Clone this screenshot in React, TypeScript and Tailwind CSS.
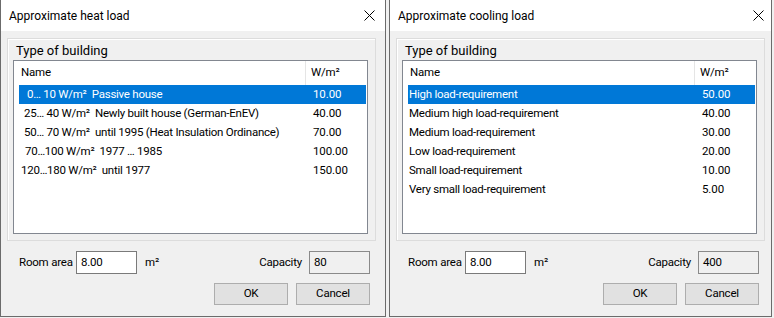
import React from "react";

type Row = { name: string; val: string; pad: string };

const heatRows: Row[] = [
  { name: "0… 10 W/m²  Passive house", val: "10.00", pad: "pl-[8px]" },
  { name: "25… 40 W/m²  Newly built house (German-EnEV)", val: "40.00", pad: "pl-[5px]" },
  { name: "50… 70 W/m²  until 1995 (Heat Insulation Ordinance)", val: "70.00", pad: "pl-[5px]" },
  { name: "70…100 W/m²  1977 … 1985", val: "100.00", pad: "pl-[6px]" },
  { name: "120…180 W/m²  until 1977", val: "150.00", pad: "pl-[2px]" },
];

const coolRows: Row[] = [
  { name: "High load-requirement", val: "50.00", pad: "pl-[1px]" },
  { name: "Medium high load-requirement", val: "40.00", pad: "pl-[1px]" },
  { name: "Medium load-requirement", val: "30.00", pad: "pl-[1px]" },
  { name: "Low load-requirement", val: "20.00", pad: "pl-[1px]" },
  { name: "Small load-requirement", val: "10.00", pad: "pl-[1px]" },
  { name: "Very small load-requirement", val: "5.00", pad: "pl-[1px]" },
];

function Dialog({
  title,
  rows,
  capacity,
  outer,
}: {
  title: string;
  rows: Row[];
  capacity: string;
  outer: string;
}) {
  return (
    <div className={`${outer} h-[317px] shrink-0 overflow-hidden border-x border-b border-[#6b6b6b] bg-[#f0f0f0]`}>
      <div className="w-[384px]">
        {/* Title bar */}
        <div className="flex h-[31px] items-center bg-white">
          <div className="pl-[8px] text-[12px] leading-none text-black">{title}</div>
          <div className="flex-1" />
          <svg width="11" height="11" viewBox="0 0 11 11" className="mr-[10px]">
            <path d="M0.5 0.5 L10.5 10.5 M10.5 0.5 L0.5 10.5" stroke="#000" strokeWidth="1" />
          </svg>
        </div>
        {/* Content column */}
        <div className="ml-[6px] w-[369px]">
          {/* Group box */}
          <div className="mt-[7px] h-[203px] border border-[#dcdcdc] shadow-[inset_1px_1px_0_#ffffff]">
            <div className="flex h-[21px] items-center pl-[8px] pt-[1px] text-[13px] leading-none text-black">
              Type of building
            </div>
            <div className="ml-[5px] h-[174px] w-[355px] border border-[#828790] bg-white">
              <div className="flex h-[24px] text-[11.5px] tracking-[-0.2px] text-black">
                <div className="flex w-[291px] items-center pl-[7px]">Name</div>
                <div className="w-px bg-[#e5e5e5]" />
                <div className="flex items-center pl-[5px]">W/m²</div>
              </div>
              {rows.map((r, i) => (
                <div
                  key={i}
                  className={`ml-[5px] flex h-[19px] w-[347px] items-center text-[11.5px] leading-none tracking-[-0.25px] ${
                    i === 0 ? "bg-[#0078d7] text-white" : "text-black"
                  }`}
                >
                  <div className={`w-[294px] whitespace-pre ${r.pad}`}>{r.name}</div>
                  <div className="tracking-[-0.1px]">{r.val}</div>
                </div>
              ))}
            </div>
          </div>
          {/* Room area row */}
          <div className="mt-[10px] flex h-[23px] items-center pr-[6px] text-[11.5px] tracking-[-0.2px] text-black">
            <div className="w-[69px] whitespace-nowrap pl-[12px]">Room area</div>
            <div className="flex h-[23px] w-[61px] items-center border border-[#7a7a7a] bg-white pl-[4px]">
              8.00
            </div>
            <div className="ml-[8px]">m²</div>
            <div className="flex-1" />
            <div>Capacity</div>
            <div className="ml-[7px] flex h-[23px] w-[61px] items-center border border-[#8a8a8a] bg-[#f0f0f0] pl-[4px]">
              {capacity}
            </div>
          </div>
          {/* Buttons */}
          <div className="mt-[9px] flex h-[22px] justify-end gap-[8px] pr-[6px] text-[11.5px] tracking-[-0.2px] text-black">
            <div className="flex w-[74px] items-center justify-center border border-[#adadad] bg-[#e1e1e1]">OK</div>
            <div className="flex w-[74px] items-center justify-center border border-[#adadad] bg-[#e1e1e1]">Cancel</div>
          </div>
        </div>
      </div>
    </div>
  );
}

export default function App() {
  return (
    <div
      className="flex h-[318px] w-[774px] overflow-hidden bg-[#f0f0f0]"
      style={{ fontFamily: 'Roboto, "Noto Sans", sans-serif' }}
    >
      <Dialog title="Approximate heat load" rows={heatRows} capacity="80" outer="w-[386px]" />
      <div className="w-[3px] shrink-0" />
      <Dialog title="Approximate cooling load" rows={coolRows} capacity="400" outer="w-[383px]" />
    </div>
  );
}
